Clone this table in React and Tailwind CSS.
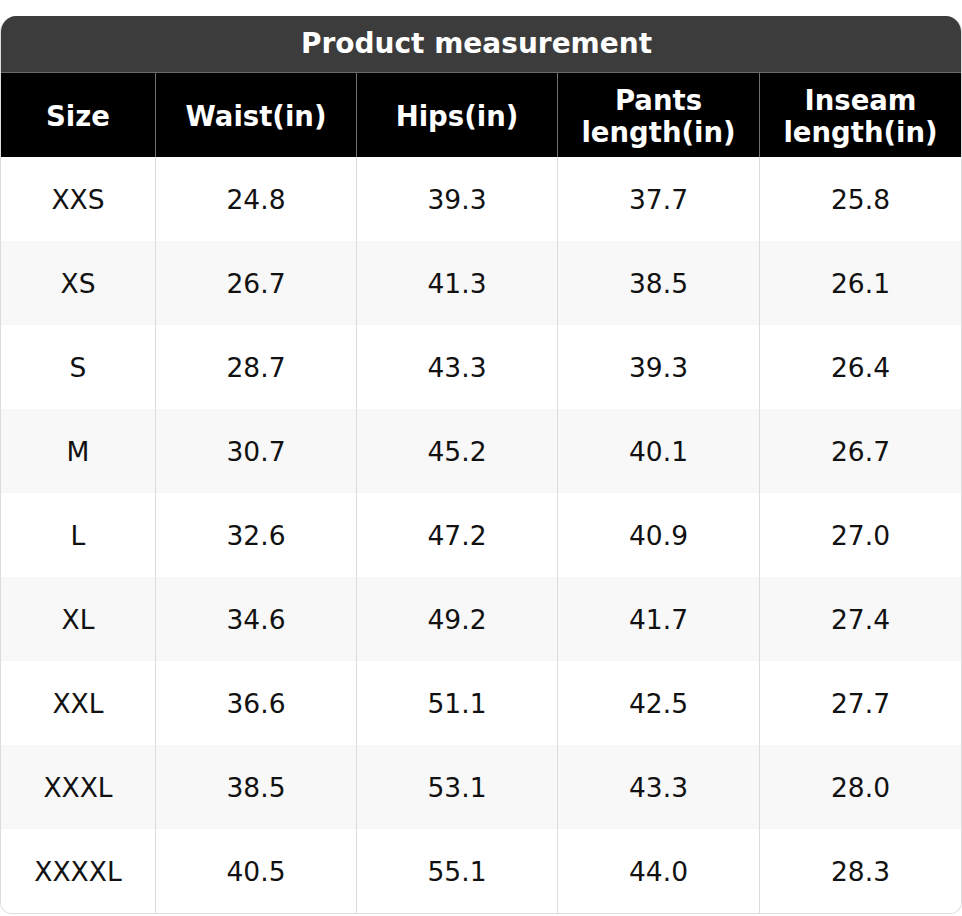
import React from "react";

const rows = [
  ["XXS", "24.8", "39.3", "37.7", "25.8"],
  ["XS", "26.7", "41.3", "38.5", "26.1"],
  ["S", "28.7", "43.3", "39.3", "26.4"],
  ["M", "30.7", "45.2", "40.1", "26.7"],
  ["L", "32.6", "47.2", "40.9", "27.0"],
  ["XL", "34.6", "49.2", "41.7", "27.4"],
  ["XXL", "36.6", "51.1", "42.5", "27.7"],
  ["XXXL", "38.5", "53.1", "43.3", "28.0"],
  ["XXXXL", "40.5", "55.1", "44.0", "28.3"],
];

const heads = [
  ["Size"],
  ["Waist(in)"],
  ["Hips(in)"],
  ["Pants", "length(in)"],
  ["Inseam", "length(in)"],
];

const cols = "grid grid-cols-[155px_201px_201px_202px_1fr]";

export default function App() {
  return (
    <div className="w-[962px] bg-white pt-4 pb-0.5 font-['DejaVu_Sans',sans-serif]">
      <div className="overflow-hidden rounded-t-2xl rounded-b-xl border-x border-b border-[#dcdcdc]">
        <div className="flex h-[57px] items-center justify-center border-b border-[#6a6a6a] bg-[#3c3c3c] pr-[9px] text-[28px] font-bold text-white">
          Product measurement
        </div>

        <div className={`${cols} h-[84px] bg-black`}>
          {heads.map((h, i) => (
            <div
              key={i}
              className={`flex flex-col items-center justify-center pt-0.5 text-center text-[27.5px] font-bold leading-8 text-white ${
                i < 4 ? "border-r border-[#707070]" : ""
              }`}
            >
              {h.map((line) => (
                <span key={line}>{line}</span>
              ))}
            </div>
          ))}
        </div>

        {rows.map((r, ri) => (
          <div key={r[0]} className={`${cols} h-[84px] ${ri % 2 ? "bg-[#f8f8f8]" : "bg-white"}`}>
            {r.map((v, i) => (
              <div
                key={i}
                className={`flex items-center justify-center pt-0.5 text-[26.5px] text-[#111] ${
                  i < 4 ? "border-r border-[#dcdcdc]" : ""
                }`}
              >
                {v}
              </div>
            ))}
          </div>
        ))}
      </div>
    </div>
  );
}
